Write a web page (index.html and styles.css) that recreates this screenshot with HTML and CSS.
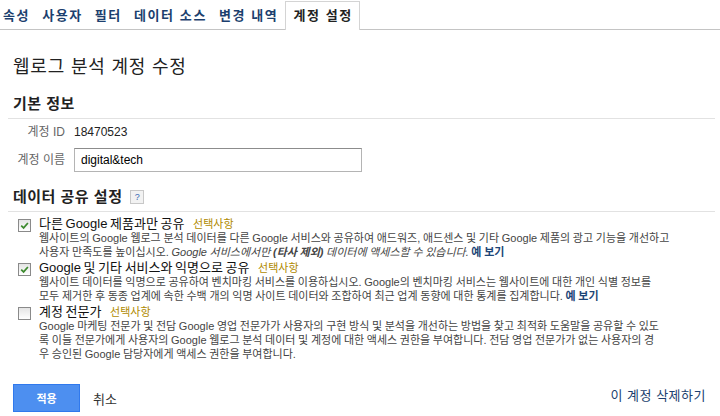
FILE: index.html
```html
<!doctype html>
<html lang="ko">
<head>
  <meta charset="UTF-8" />
  <title>계정 설정</title>
  <link rel="stylesheet" href="styles.css">
</head>
<body>
  <ul class="tabs">
    <li>속성</li>
    <li>사용자</li>
    <li>필터</li>
    <li>데이터 소스</li>
    <li>변경 내역</li>
    <li class="active">계정 설정</li>
  </ul>

  <div class="page">
    <h1>웹로그 분석 계정 수정</h1>

    <h2 class="section">기본 정보</h2>
    <div class="field">
      <span class="label">계정 ID</span>
      <span class="value">18470523</span>
    </div>
    <div class="field">
      <span class="label">계정 이름</span>
      <input class="name" type="text" value="digital&amp;tech">
    </div>

    <h2 class="section share">데이터 공유 설정 <span class="help">?</span></h2>

    <div class="option">
      <span class="box"><svg viewBox="0 0 11 11" width="11" height="11"><path d="M2.2 5.6 L4.6 7.9 L8.9 3" fill="none" stroke="#3d8a2e" stroke-width="1.7"/></svg></span>
      <div class="text">
        <div class="title">다른 Google 제품과만 공유 <span class="opt">선택사항</span></div>
        <p>웹사이트의 Google 웹로그 분석 데이터를 다른 Google 서비스와 공유하여 애드워즈, 애드센스 및 기타 Google 제품의 광고 기능을 개선하고<br>
        사용자 만족도를 높이십시오. <em>Google 서비스에서만 <b>(타사 제외)</b> 데이터에 액세스할 수 있습니다.</em> <a href="#">예 보기</a></p>
      </div>
    </div>

    <div class="option">
      <span class="box"><svg viewBox="0 0 11 11" width="11" height="11"><path d="M2.2 5.6 L4.6 7.9 L8.9 3" fill="none" stroke="#3d8a2e" stroke-width="1.7"/></svg></span>
      <div class="text">
        <div class="title">Google 및 기타 서비스와 익명으로 공유 <span class="opt">선택사항</span></div>
        <p>웹사이트 데이터를 익명으로 공유하여 벤치마킹 서비스를 이용하십시오. Google의 벤치마킹 서비스는 웹사이트에 대한 개인 식별 정보를<br>
        모두 제거한 후 동종 업계에 속한 수백 개의 익명 사이트 데이터와 조합하여 최근 업계 동향에 대한 통계를 집계합니다. <a href="#">예 보기</a></p>
      </div>
    </div>

    <div class="option">
      <span class="box"></span>
      <div class="text">
        <div class="title">계정 전문가 <span class="opt">선택사항</span></div>
        <p>Google 마케팅 전문가 및 전담 Google 영업 전문가가 사용자의 구현 방식 및 분석을 개선하는 방법을 찾고 최적화 도움말을 공유할 수 있도<br>
        록 이들 전문가에게 사용자의 Google 웹로그 분석 데이터 및 계정에 대한 액세스 권한을 부여합니다. 전담 영업 전문가가 없는 사용자의 경<br>
        우 승인된 Google 담당자에게 액세스 권한을 부여합니다.</p>
      </div>
    </div>

    <div class="actions">
      <button class="apply">적용</button>
      <a class="cancel" href="#">취소</a>
      <a class="delete" href="#">이 계정 삭제하기</a>
    </div>
  </div>
</body>
</html>
```

FILE: styles.css
```css
html, body {
  margin: 0;
  padding: 0;
  background: #fff;
  font-family: "Liberation Sans", "Noto Sans CJK KR", sans-serif;
  color: #222;
}
.tabs {
  list-style: none;
  margin: 0;
  padding: 0 0 0 3px;
  display: flex;
  align-items: flex-end;
  gap: 12px;
  height: 29px;
  border-bottom: 1px solid #c4c4c4;
}
.tabs li {
  font-size: 13px;
  font-weight: bold;
  letter-spacing: 1.6px;
  color: #1c3f6e;
  line-height: 27px;
  height: 27px;
}
.tabs li.active {
  color: #222;
  background: #fff;
  border: 1px solid #d4d4d4;
  border-bottom: none;
  height: 28px;
  margin: 0 0 -1px -5px;
  padding: 0 6px 0 7px;
}
.page {
  padding: 0 5px 0 13px;
}
h1 {
  font-size: 18px;
  font-weight: normal;
  letter-spacing: 0.8px;
  margin: 24px 0 0 0;
  line-height: 26px;
}
.section {
  font-size: 15px;
  font-weight: bold;
  letter-spacing: 0.5px;
  margin: 14px 0 0 -5px;
  padding: 0 0 4px 5px;
  line-height: 20px;
  border-bottom: 1px solid #e2e2e2;
  display: flex;
  align-items: center;
}
.section.share {
  margin-top: 15px;
}
.help {
  width: 12px;
  height: 12px;
  margin-left: 8px;
  border: 1px solid #c8c8c8;
  background: #f2f2f2;
  color: #3a6ab4;
  font-size: 9px;
  font-weight: normal;
  line-height: 12px;
  text-align: center;
}
.field {
  display: flex;
  align-items: center;
  gap: 9px;
  margin-top: 5px;
  font-size: 12px;
  line-height: 16px;
}
.field + .field {
  margin-top: 8px;
}
.label {
  width: 52px;
  text-align: right;
  color: #666;
}
.value {
  color: #222;
}
.name {
  width: 288px;
  height: 24px;
  box-sizing: border-box;
  padding: 2px 6px;
  border: 1px solid #b4b4b4;
  border-top-color: #8c8c8c;
  font-family: "Liberation Sans", sans-serif;
  font-size: 12px;
}
.option {
  display: flex;
  gap: 8px;
  margin: 2px 0 0 5px;
}
.share + .option {
  margin-top: 5px;
}
.box {
  flex: none;
  width: 11px;
  height: 11px;
  margin-top: 2px;
  border: 1px solid #8a8a8a;
  background: linear-gradient(#e4e4e4, #fff);
  display: flex;
}
.text .title {
  font-size: 13px;
  line-height: 14px;
  word-spacing: -1px;
  color: #111;
}
.opt {
  font-size: 11px;
  word-spacing: 0;
  color: #b08a00;
  margin-left: 6px;
}
.text p {
  margin: 0;
  font-size: 11px;
  line-height: 14px;
  word-spacing: -0.4px;
  white-space: nowrap;
  color: #444;
}
.text em {
  font-style: italic;
}
.text a {
  color: #1d4576;
  font-weight: bold;
  text-decoration: none;
}
.actions {
  display: flex;
  align-items: center;
  margin-top: 23px;
}
.apply {
  width: 67px;
  height: 28px;
  border: 1px solid #3079ed;
  background: #4d8ff0;
  color: #fff;
  font-weight: bold;
  font-size: 11px;
  font-family: "Noto Sans CJK KR", sans-serif;
}
.cancel {
  margin-left: 13px;
  font-size: 13px;
  color: #333;
  text-decoration: none;
}
.delete {
  margin: 0 9px 8px auto;
  font-size: 13px;
  letter-spacing: 0.5px;
  color: #1c3f6e;
  text-decoration: none;
}
```
